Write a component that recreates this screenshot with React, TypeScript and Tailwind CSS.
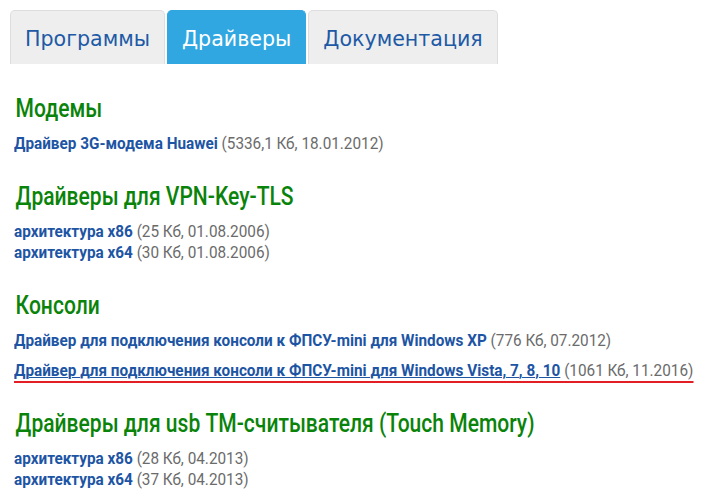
import React from 'react';

type Item = { title: string; info: string; marked?: boolean };
type Section = { heading: string; items: Item[]; spaced?: boolean };

const tabs = [
  { label: 'Программы', active: false },
  { label: 'Драйверы', active: true },
  { label: 'Документация', active: false },
];

const sections: Section[] = [
  {
    heading: 'Модемы',
    items: [{ title: 'Драйвер 3G-модема Huawei', info: '(5336,1 Кб, 18.01.2012)' }],
  },
  {
    heading: 'Драйверы для VPN-Key-TLS',
    items: [
      { title: 'архитектура x86', info: '(25 Кб, 01.08.2006)' },
      { title: 'архитектура x64', info: '(30 Кб, 01.08.2006)' },
    ],
  },
  {
    heading: 'Консоли',
    spaced: true,
    items: [
      { title: 'Драйвер для подключения консоли к ФПСУ-mini для Windows XP', info: '(776 Кб, 07.2012)' },
      {
        title: 'Драйвер для подключения консоли к ФПСУ-mini для Windows Vista, 7, 8, 10',
        info: '(1061 Кб, 11.2016)',
        marked: true,
      },
    ],
  },
  {
    heading: 'Драйверы для usb ТМ-считывателя (Touch Memory)',
    items: [
      { title: 'архитектура x86', info: '(28 Кб, 04.2013)' },
      { title: 'архитектура x64', info: '(37 Кб, 04.2013)' },
    ],
  },
];

// Roboto squeezed horizontally stands in for a condensed face
const DownloadRow: React.FC<{ item: Item }> = ({ item }) => (
  <div className="h-[21px] leading-[21px] whitespace-nowrap origin-left scale-x-[0.9]">
    <span className={item.marked ? 'inline-block leading-[21px] border-b-2 border-[#e31e24]' : ''}>
      <a
        href="#"
        className={`font-bold text-[#1d55a4] ${item.marked ? 'underline underline-offset-[1px] decoration-1' : ''}`}
      >
        {item.title}
      </a>{' '}
      <span className="text-[#6b6b6b]">{item.info}</span>
    </span>
  </div>
);

export default function App() {
  return (
    <div className="w-[711px] h-[504px] bg-white overflow-hidden">
      <div className="flex gap-[2px] pl-[10px] pt-[10px]">
        {tabs.map((t) => (
          <div
            key={t.label}
            className={`h-[54px] px-[14px] pt-[13px] rounded-t-[5px] text-[20.6px] leading-[30px] font-['DejaVu_Sans',sans-serif] ${
              t.active
                ? 'bg-[#31a7e2] border border-[#31a7e2] border-b-0 text-white'
                : 'bg-[#eeeeee] border border-[#dddddd] border-b-0 text-[#1d5aa6]'
            }`}
          >
            {t.label}
          </div>
        ))}
      </div>

      <div className="pl-[14px] pt-[28px] font-['Roboto',sans-serif] text-[17px]">
        {sections.map((s) => (
          <div key={s.heading} className="mb-[26px]">
            <h2 className="pl-[2px] h-[32px] text-[26px] leading-[32px] font-medium text-[#0a830a] whitespace-nowrap origin-left scale-x-[0.81] mb-[9px]">
              {s.heading}
            </h2>
            <div className={s.spaced ? 'flex flex-col gap-[9px]' : 'flex flex-col'}>
              {s.items.map((it) => (
                <DownloadRow key={it.title} item={it} />
              ))}
            </div>
          </div>
        ))}
      </div>
    </div>
  );
}
